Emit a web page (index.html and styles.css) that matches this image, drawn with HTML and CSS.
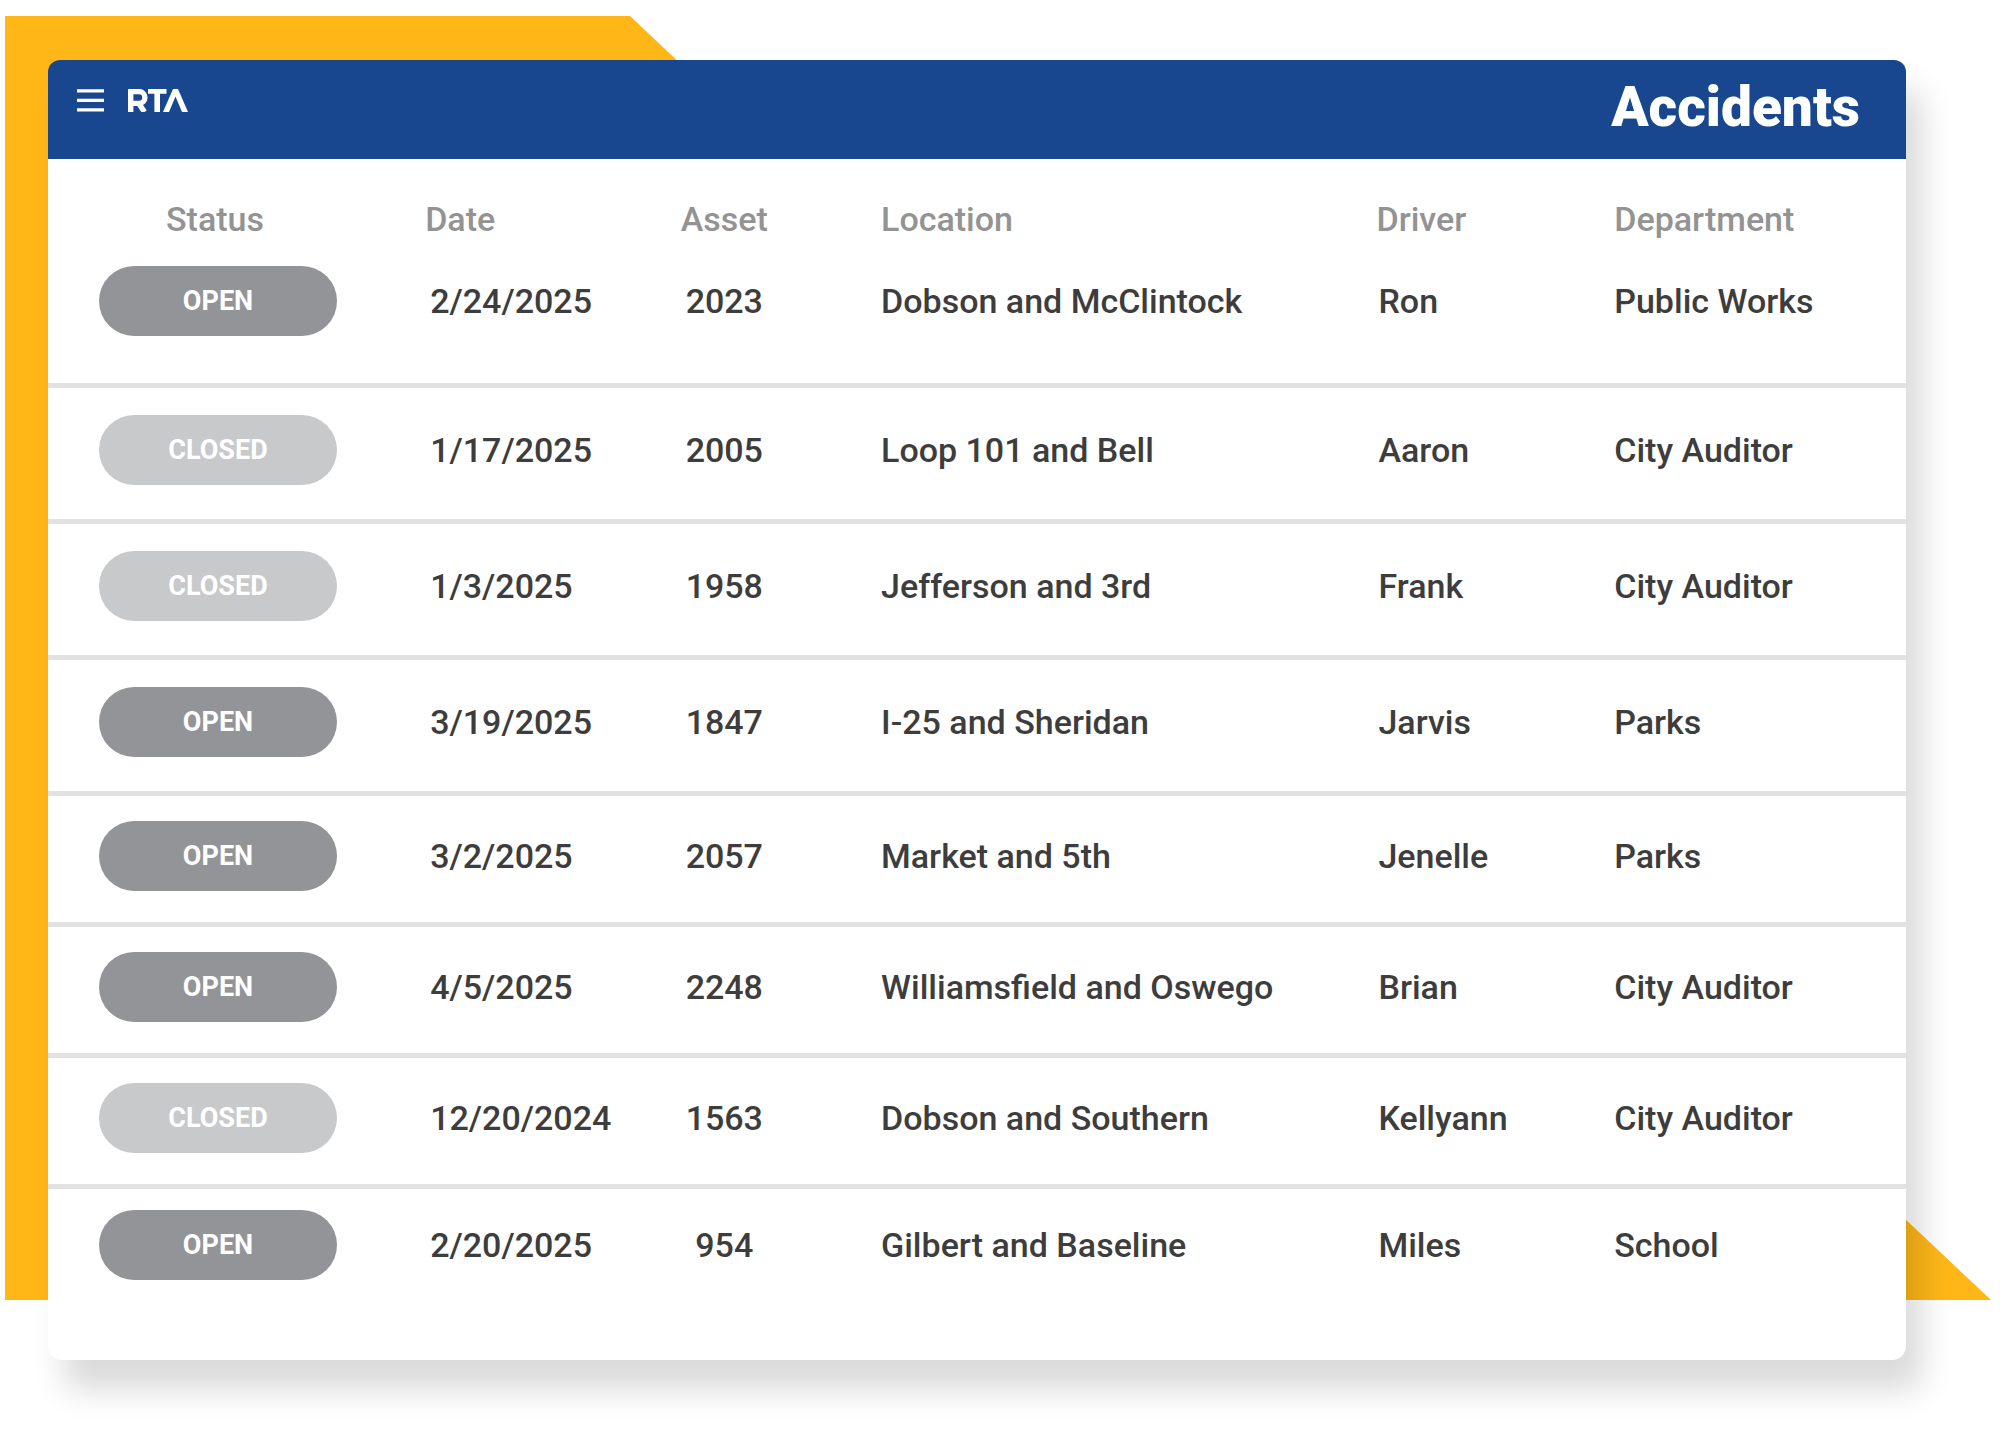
FILE: index.html
```html
<!DOCTYPE html>
<html lang="en">
<head>
<meta charset="utf-8">
<meta name="viewport" content="width=device-width, initial-scale=1">
<title>RTA Accidents</title>
<link rel="stylesheet" href="styles.css">
</head>
<body>
<main class="stage">
  <svg class="backdrop" viewBox="0 0 1986 1285" preserveAspectRatio="none" aria-hidden="true"><path d="M0 0H625L1986 1285H0Z"/></svg>
  <section class="card">
    <header class="bar">
      <div class="brand">
        <button class="menu" type="button" aria-label="Menu">
          <svg width="27" height="23" viewBox="0 0 27 23"><path d="M0 1.8H27M0 11.3H27M0 20.8H27" stroke="currentColor" stroke-width="3.2"/></svg>
        </button>
        <svg class="logo" width="60" height="23" viewBox="0 0 60 23" role="img" aria-label="RTA">
          <path d="M2.7 23V2.6H11A5.4 5.4 0 0 1 11 14.4H2.700M10.500 14L16.500 23" fill="none" stroke="currentColor" stroke-width="5.400"/>
          <path d="M20 0H38.500V4.800H32V23H26.400V4.800H20Z" fill="currentColor"/>
          <path d="M35 23L45 0H50L60 23H54L47.500 7.500L41 23Z" fill="currentColor"/>
        </svg>
      </div>
      <h1 class="title">Accidents</h1>
    </header>
    <table class="accidents">
      <colgroup><col class="c-status"><col class="c-date"><col class="c-asset"><col class="c-location"><col class="c-driver"><col class="c-dept"></colgroup>
      <thead>
        <tr><th scope="col">Status</th><th scope="col">Date</th><th scope="col" class="asset">Asset</th><th scope="col" class="location">Location</th><th scope="col">Driver</th><th scope="col">Department</th></tr>
      </thead>
      <tbody>
        <tr class="first"><td><span class="pill open">OPEN</span></td><td class="date">2/24/2025</td><td class="asset">2023</td><td class="location">Dobson and McClintock</td><td class="driver">Ron</td><td>Public Works</td></tr>
        <tr><td><span class="pill closed">CLOSED</span></td><td class="date">1/17/2025</td><td class="asset">2005</td><td class="location">Loop 101 and Bell</td><td class="driver">Aaron</td><td>City Auditor</td></tr>
        <tr><td><span class="pill closed">CLOSED</span></td><td class="date">1/3/2025</td><td class="asset">1958</td><td class="location">Jefferson and 3rd</td><td class="driver">Frank</td><td>City Auditor</td></tr>
        <tr><td><span class="pill open">OPEN</span></td><td class="date">3/19/2025</td><td class="asset">1847</td><td class="location">I-25 and Sheridan</td><td class="driver">Jarvis</td><td>Parks</td></tr>
        <tr class="compact"><td><span class="pill open">OPEN</span></td><td class="date">3/2/2025</td><td class="asset">2057</td><td class="location">Market and 5th</td><td class="driver">Jenelle</td><td>Parks</td></tr>
        <tr class="compact"><td><span class="pill open">OPEN</span></td><td class="date">4/5/2025</td><td class="asset">2248</td><td class="location">Williamsfield and Oswego</td><td class="driver">Brian</td><td>City Auditor</td></tr>
        <tr class="compact"><td><span class="pill closed">CLOSED</span></td><td class="date">12/20/2024</td><td class="asset">1563</td><td class="location">Dobson and Southern</td><td class="driver">Kellyann</td><td>City Auditor</td></tr>
        <tr class="last"><td><span class="pill open">OPEN</span></td><td class="date">2/20/2025</td><td class="asset">954</td><td class="location">Gilbert and Baseline</td><td class="driver">Miles</td><td>School</td></tr>
      </tbody>
    </table>
  </section>
</main>
</body>
</html>
```

FILE: styles.css
```css
* { box-sizing: border-box; }

body {
  margin: 0;
  background: #fff;
  color: #3d3d3d;
  font-family: Roboto, "Liberation Sans", sans-serif;
}

.stage {
  position: relative;
  padding: 60px 94px 92px 48px;
}

/* Slanted yellow panel behind the card */
.backdrop {
  position: absolute;
  top: 16px;
  left: 5px;
  width: calc(100% - 14px);
  height: calc(100% - 168px);
  fill: #ffb718;
}

.card {
  position: relative;
  padding-bottom: 80px;
  border-radius: 14px;
  background: #fff;
  box-shadow: 16px 30px 32px rgba(0, 0, 0, 0.15);
}

.bar {
  display: flex;
  justify-content: space-between;
  align-items: flex-start;
  padding: 15px 46px 20px 29px;
  border-radius: 12px 12px 0 0;
  background: #18478f;
  color: #fff;
}

.brand {
  display: flex;
  align-items: center;
  gap: 24px;
  padding-top: 14px;
}

.menu {
  display: block;
  padding: 0;
  border: 0;
  background: none;
  color: inherit;
}

.menu svg,
.logo { display: block; }

.title {
  margin: 0;
  font-size: 55px;
  font-weight: 900;
  line-height: 64px;
}

.accidents {
  width: 100%;
  table-layout: fixed;
  border-collapse: separate;
  border-spacing: 0;
  font-size: 34px;
  font-weight: 500;
  line-height: 40px;
  white-space: nowrap;
}

.c-status { width: 20.3%; }
.c-date { width: 11.7%; }
.c-asset { width: 8.8%; }
.c-location { width: 30.7%; }
.c-driver { width: 12.8%; }

th,
td {
  padding: 0;
  text-align: left;
  vertical-align: middle;
}

th {
  padding: 40px 0 27px;
  color: #939393;
  font-weight: 500;
}

td {
  padding: 27px 0 34px;
  border-bottom: 5px solid #e2e2e2;
}

.first td { padding: 0 0 47px; }
.compact td { padding: 25px 0 31px; }

.last td {
  padding: 21px 0 0;
  border-bottom: 0;
}

th:first-child { padding-left: 118px; }
tr td:first-child { padding-left: 51px; }
tr td.date { padding-left: 5px; }
tr .asset { text-align: center; }
tr .location { padding-left: 75px; }
tr td.driver { padding-left: 2px; }

.pill {
  display: block;
  width: 238px;
  border-radius: 35px;
  color: #fff;
  font-size: 27px;
  font-weight: 700;
  line-height: 70px;
  text-align: center;
}

.open { background: #939498; }
.closed { background: #c8c9cb; }
```
